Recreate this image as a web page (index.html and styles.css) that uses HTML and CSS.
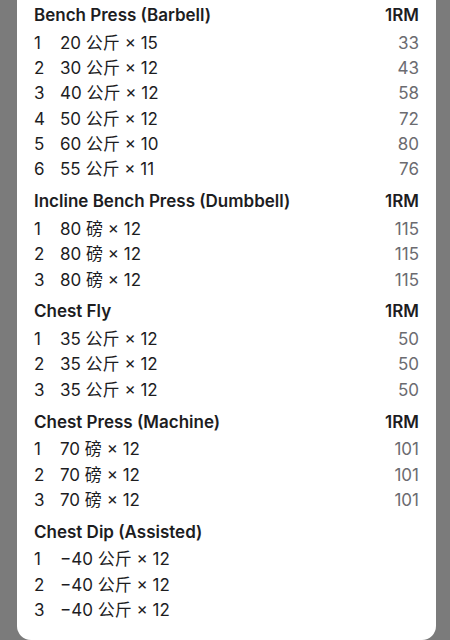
FILE: index.html
```html
<!DOCTYPE html>
<html lang="zh">
<head>
<meta charset="utf-8">
<link rel="stylesheet" href="styles.css">
</head>
<body>
<div class="screen">
  <div class="card">
    <section class="ex">
      <div class="head"><span>Bench Press (Barbell)</span><span class="rm">1RM</span></div>
      <div class="row"><span class="n">1</span><span class="w">20 公斤 × 15</span><span class="v">33</span></div>
      <div class="row"><span class="n">2</span><span class="w">30 公斤 × 12</span><span class="v">43</span></div>
      <div class="row"><span class="n">3</span><span class="w">40 公斤 × 12</span><span class="v">58</span></div>
      <div class="row"><span class="n">4</span><span class="w">50 公斤 × 12</span><span class="v">72</span></div>
      <div class="row"><span class="n">5</span><span class="w">60 公斤 × 10</span><span class="v">80</span></div>
      <div class="row"><span class="n">6</span><span class="w">55 公斤 × 11</span><span class="v">76</span></div>
    </section>
    <section class="ex">
      <div class="head"><span>Incline Bench Press (Dumbbell)</span><span class="rm">1RM</span></div>
      <div class="row"><span class="n">1</span><span class="w">80 磅 × 12</span><span class="v">115</span></div>
      <div class="row"><span class="n">2</span><span class="w">80 磅 × 12</span><span class="v">115</span></div>
      <div class="row"><span class="n">3</span><span class="w">80 磅 × 12</span><span class="v">115</span></div>
    </section>
    <section class="ex">
      <div class="head"><span>Chest Fly</span><span class="rm">1RM</span></div>
      <div class="row"><span class="n">1</span><span class="w">35 公斤 × 12</span><span class="v">50</span></div>
      <div class="row"><span class="n">2</span><span class="w">35 公斤 × 12</span><span class="v">50</span></div>
      <div class="row"><span class="n">3</span><span class="w">35 公斤 × 12</span><span class="v">50</span></div>
    </section>
    <section class="ex">
      <div class="head"><span>Chest Press (Machine)</span><span class="rm">1RM</span></div>
      <div class="row"><span class="n">1</span><span class="w">70 磅 × 12</span><span class="v">101</span></div>
      <div class="row"><span class="n">2</span><span class="w">70 磅 × 12</span><span class="v">101</span></div>
      <div class="row"><span class="n">3</span><span class="w">70 磅 × 12</span><span class="v">101</span></div>
    </section>
    <section class="ex">
      <div class="head"><span>Chest Dip (Assisted)</span></div>
      <div class="row"><span class="n">1</span><span class="w">−40 公斤 × 12</span></div>
      <div class="row"><span class="n">2</span><span class="w">−40 公斤 × 12</span></div>
      <div class="row"><span class="n">3</span><span class="w">−40 公斤 × 12</span></div>
    </section>
  </div>
</div>
</body>
</html>
```
FILE: styles.css
```css
html, body {
  margin: 0;
  padding: 0;
  background: #7b7b7b;
}
body {
  font-family: Inter, "Noto Sans CJK SC", sans-serif;
  font-size: 17px;
  color: #1d1d1f;
}
.screen {
  width: 450px;
  height: 640px;
  overflow: hidden;
  padding: 0 14px 0 17px;
  box-sizing: border-box;
}
.card {
  background: #ffffff;
  border-radius: 0 0 14px 14px;
  padding: 1px 17px 16px 17px;
  height: 640px;
  box-sizing: border-box;
}
.ex + .ex {
  margin-top: 4.5px;
}
.head {
  display: flex;
  justify-content: space-between;
  align-items: baseline;
  height: 29.7px;
  line-height: 29.7px;
  font-weight: 600;
  overflow: hidden;
}
.row {
  display: flex;
  align-items: baseline;
  height: 25.33px;
  line-height: 25.33px;
  overflow: hidden;
}
.n {
  width: 26px;
  flex: none;
}
.w {
  flex: 1;
}
.v {
  color: #6b6b70;
}
```
